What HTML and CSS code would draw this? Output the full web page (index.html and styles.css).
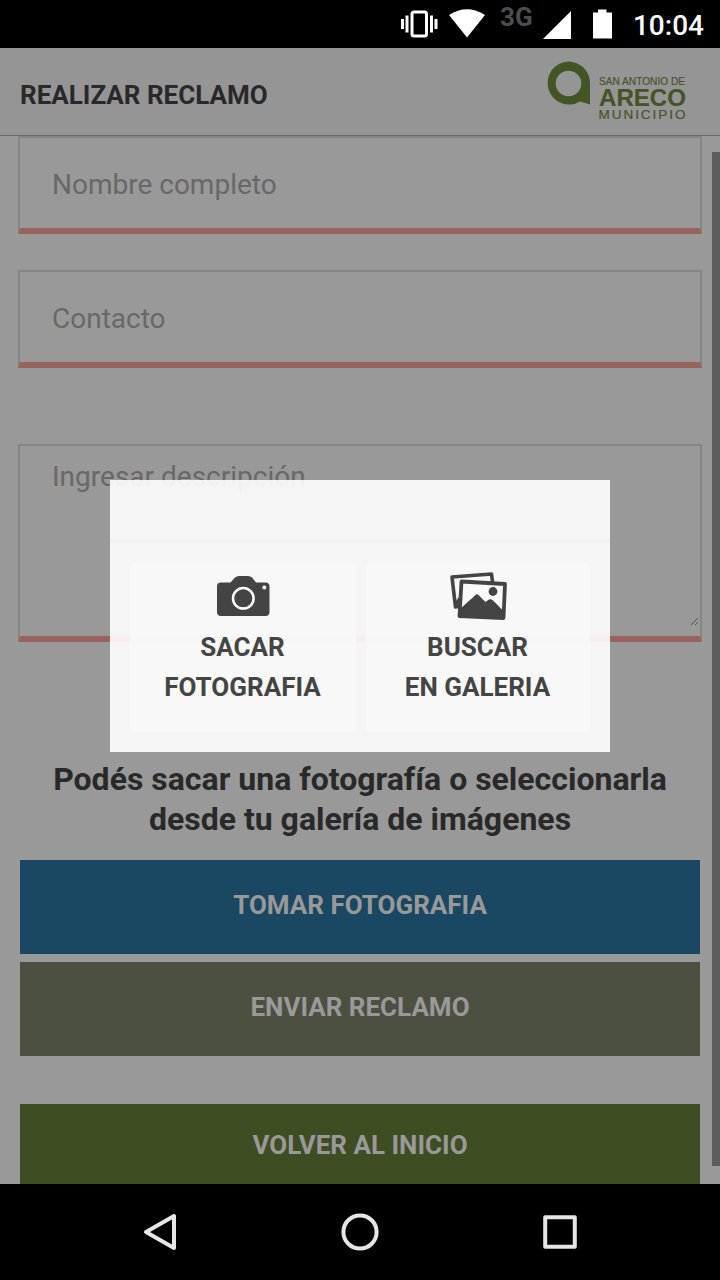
FILE: index.html
```html
<!DOCTYPE html>
<html lang="es">
<head>
<meta charset="utf-8">
<title>Realizar reclamo</title>
<link rel="stylesheet" href="styles.css">
</head>
<body>
<div class="phone">
  <div class="status">
    <svg class="status-icons" width="230" height="48" viewBox="0 0 230 48" fill="#fff">
      <rect x="22" y="12" width="14.500" height="24" rx="2" fill="none" stroke="#fff" stroke-width="3"/>
      <path d="M11 19h3v10h-3zM15.500 15.500h3v17h-3zM40 15.500h3v17h-3zM44.500 19h3v10h-3z"/>
      <path d="M59 15Q77 3.500 95 15L77 37.500Z"/>
      <path d="M181 11V39H153ZM208 9.500h8.500v3H222V38.500H203V12.500h5Z"/>
    </svg>
    <span class="network">3G</span>
    <span class="clock">10:04</span>
  </div>

  <header class="header">
    <h1 class="title">REALIZAR RECLAMO</h1>
    <svg class="logo" width="142" height="62" viewBox="0 0 142 62">
      <path fill="#445525" fill-rule="evenodd" d="M22.500 1.500A21.500 21.500 0 0 1 44 23V44.500L34 41.500A21.500 21.500 0 1 1 22.500 1.500ZM22.500 10.700a12.800 12.800 0 1 0 0 25.600a12.800 12.800 0 1 0 0-25.600Z"/>
      <g class="logo-text" fill="#46542c" stroke="#46542c" stroke-width=".2">
        <text x="53" y="24.500" font-size="11.500" textLength="86" lengthAdjust="spacingAndGlyphs">SAN ANTONIO DE</text>
        <text x="53" y="45.500" font-size="24" font-weight="700" fill="#445525" textLength="87" lengthAdjust="spacingAndGlyphs">ARECO</text>
        <text x="52.500" y="58.700" font-size="13.500" textLength="87">MUNICIPIO</text>
      </g>
    </svg>
  </header>

  <main class="content">
    <div class="field">Nombre completo</div>
    <div class="field">Contacto</div>
    <div class="field field-area">Ingresar descripción
      <svg class="grip" width="9" height="9" viewBox="0 0 9 9" stroke="#555" stroke-width="1"><path d="M1 8L8 1M5 8L8 5"/></svg>
    </div>
    <p class="hint">Podés sacar una fotografía o seleccionarla<br>desde tu galería de imágenes</p>
    <div class="button photo">TOMAR FOTOGRAFIA</div>
    <div class="button send">ENVIAR RECLAMO</div>
    <div class="button home">VOLVER AL INICIO</div>
    <div class="scrollbar"></div>
  </main>

  <nav class="nav">
    <svg width="720" height="96" viewBox="0 0 720 96" fill="none" stroke="#e6e6e6" stroke-width="4" stroke-linejoin="round">
      <path d="M174 32V64L146 48Z"/>
      <circle cx="360" cy="48" r="16.600"/>
      <rect x="545.200" y="33.200" width="29.600" height="29.600"/>
    </svg>
  </nav>

  <section class="modal">
    <div class="modal-head"></div>
    <div class="modal-body">
      <div class="option">
        <svg width="54" height="40" viewBox="0 0 54 40">
          <path fill="#444" d="M5 6.500h9.500L19 1.500Q20.500 0 23 0h9Q34.500 0 36 1.500L40 6.500h9.500q4 0 4 4V36q0 4-4 4H5q-4 0-4-4V10.500q0-4 4-4Z"/>
          <circle cx="27.300" cy="22.300" r="10.300" fill="none" stroke="#fff" stroke-width="2.500"/>
          <circle cx="48.300" cy="11.500" r="2" fill="#fff"/>
        </svg>
        <span>SACAR<br>FOTOGRAFIA</span>
      </div>
      <div class="option gallery">
        <svg width="58" height="50" viewBox="0 0 58 50">
          <path fill="none" stroke="#444" stroke-width="3.600" stroke-linejoin="round" d="M43.500 11L42.500 3L3 6L6.500 36L9 35.500"/>
          <path fill="#444" d="M7 30L10 26V37H7Z"/>
          <path fill="#f9f9f9" stroke="#444" stroke-width="3.800" stroke-linejoin="round" d="M12.500 10.500L56 13L54.500 47L10.500 45Z"/>
          <path fill="#444" d="M11 38L26 24.500Q28 22 30 24.500L36.500 31L40 28.500Q42 27.500 44 29.500L55 40.500L54.500 47L10 45Z"/>
          <circle cx="44" cy="20.500" r="4.400" fill="#444"/>
        </svg>
        <span>BUSCAR<br>EN GALERIA</span>
      </div>
    </div>
  </section>
</div>
</body>
</html>
```
FILE: styles.css
```css
* { box-sizing: border-box; }
body { margin: 0; background: #000; font-family: Roboto, "Liberation Sans", sans-serif; }
svg { display: block; flex: none; }
.phone { position: relative; width: 720px; height: 1280px; display: flex; flex-direction: column; overflow: hidden; background: #999; }

.status { position: relative; height: 48px; flex: none; display: flex; justify-content: flex-end; align-items: center; padding-right: 16px; background: #000; color: #fff; }
.status-icons { position: absolute; left: 390px; top: 0; }
.network { position: absolute; left: 500px; top: 2px; font-size: 26px; line-height: 30px; font-weight: 700; color: #4d4d4d; }
.clock { font-size: 28px; line-height: 44px; font-weight: 500; padding-top: 3px; }

.header { height: 88px; flex: none; display: flex; justify-content: space-between; align-items: flex-start; padding: 12px 32px 0 20px; background: #959595; border-bottom: 1px solid #6b6b6b; }
.title { margin: 15px 0 0; font-size: 26px; line-height: 40px; font-weight: 700; color: #292929; }
.logo { overflow: visible; }
.logo-text { font-family: "Liberation Sans", Arial, sans-serif; }

.content { position: relative; height: 1048px; flex: none; display: flex; flex-direction: column; padding: 0 18px; }
.field { height: 98px; flex: none; margin-bottom: 36px; padding: 0 32px; border: 2px solid #858585; border-bottom: 6px solid #98635b; font-size: 28px; line-height: 94px; color: #686868; }
.field-area { position: relative; height: 198px; margin: 40px 0 0; padding-top: 11px; line-height: 40px; }
.grip { position: absolute; right: 1px; bottom: 10px; }
.hint { margin: 117px 0 21px; font-size: 32px; line-height: 40px; font-weight: 700; text-align: center; color: #292929; }
.button { flex: none; height: 94px; margin: 0 2px 8px; font-size: 26px; line-height: 90px; font-weight: 700; text-align: center; color: #999; }
.photo { background: #1a4863; }
.send { background: #4c5040; }
.home { height: 80px; margin: 40px 2px 0; line-height: 82px; background: #3e4d22; }
.scrollbar { position: absolute; right: 0; top: 16px; width: 8px; height: 1014px; background: #5d5d5d; }

.nav { height: 96px; flex: none; background: #000; }

.modal { position: absolute; left: 110px; top: 480px; width: 500px; height: 272px; background: rgba(255, 255, 255, .9); }
.modal-head { height: 62px; border-bottom: 2px solid rgba(0, 0, 0, .025); }
.modal-body { display: grid; grid-template-columns: 226px 224px; gap: 10px; padding: 20px; }
.option { height: 170px; display: flex; flex-direction: column; align-items: center; gap: 11px; padding: 14px 1px 0 0; border-radius: 4px; background: rgba(249, 249, 249, .8); font-size: 26px; line-height: 40px; font-weight: 700; text-align: center; color: #444; }
.gallery { padding-top: 9px; gap: 6px; }
```
